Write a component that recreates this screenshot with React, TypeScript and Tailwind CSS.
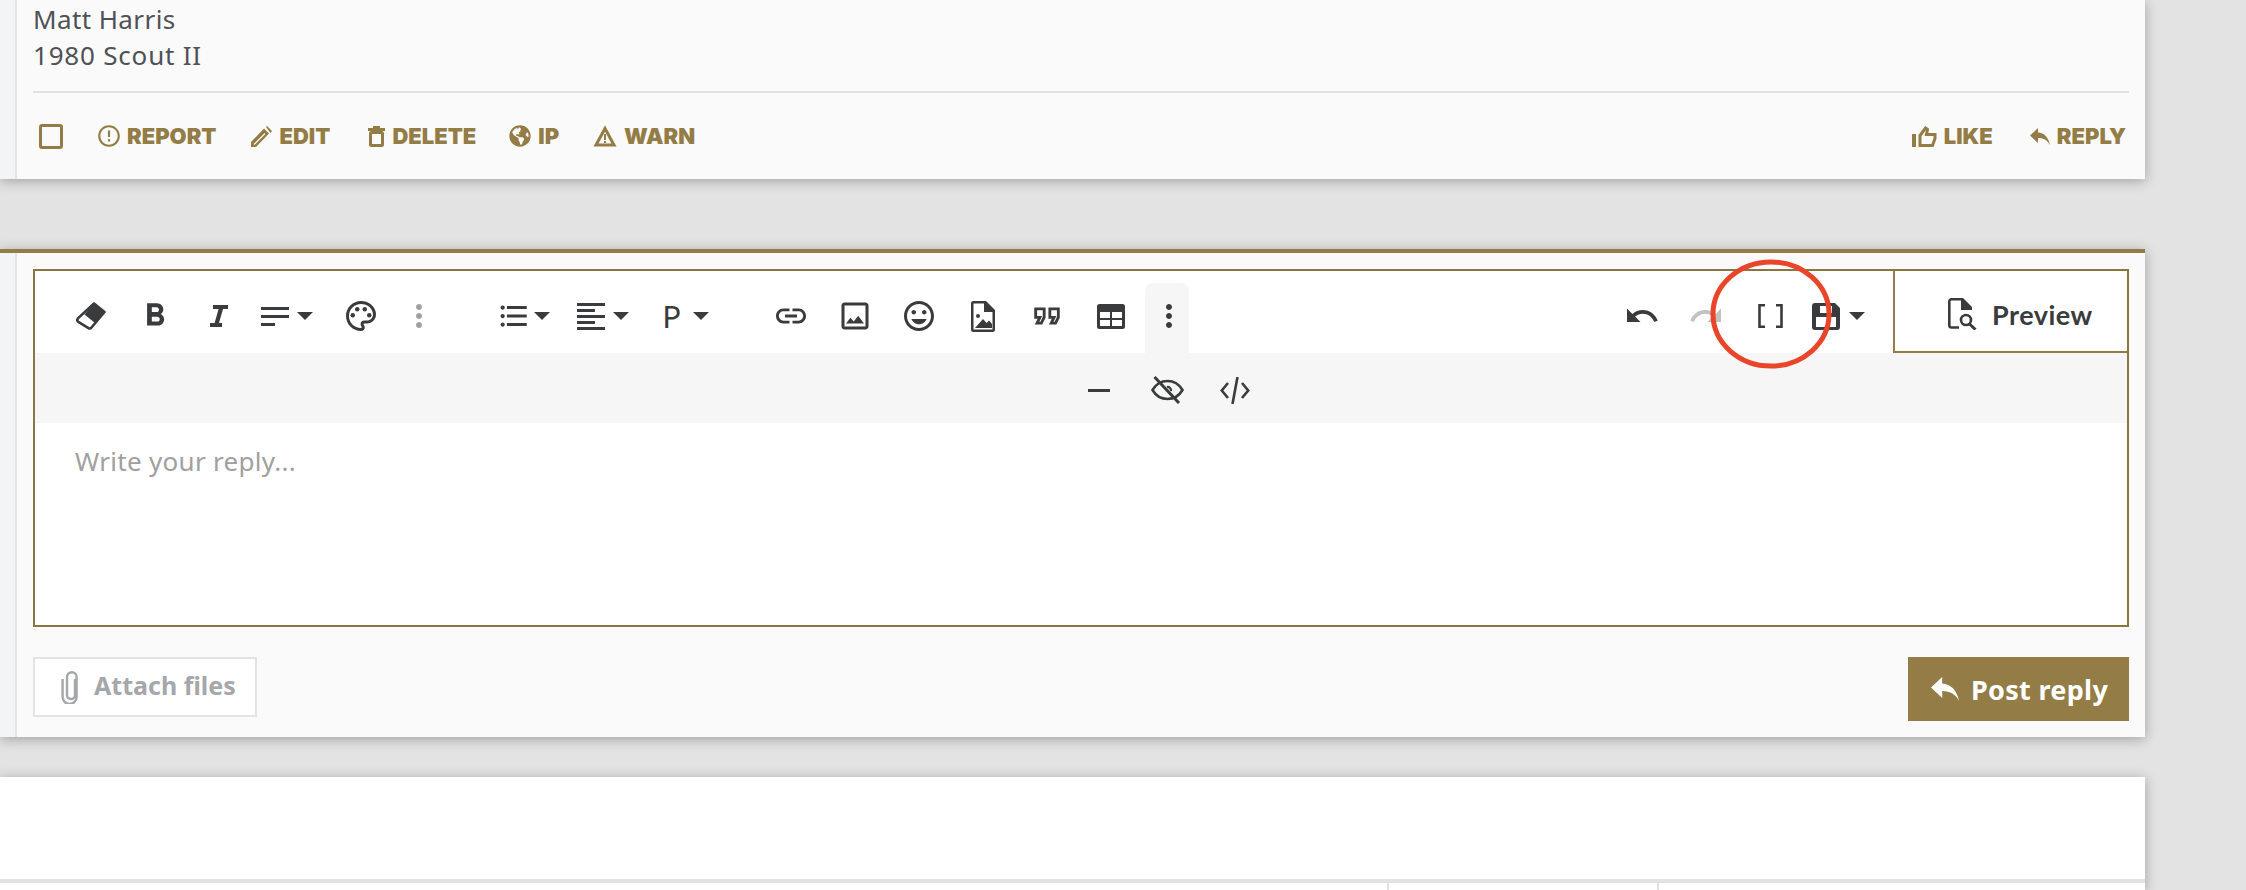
import React from "react";
import { MdErrorOutline, MdFormatBold, MdFormatListBulleted, MdLink, MdMoreVert, MdOutlineFormatQuote, MdOutlineImage, MdOutlineMood, MdOutlinePalette, MdRedo, MdUndo } from "react-icons/md";
import { FaGlobeAmericas } from "react-icons/fa";

const Caret = () => (
  <svg width="16" height="8" viewBox="0 0 16 8" className="block shrink-0"><polygon points="0,0 16,0 8,8" fill="#3a3b3d" /></svg>
);

const Eraser = () => (
  <svg width="30" height="28" viewBox="0 0 30 28" className="block">
    <path d="M18 1.5 28.5 10 15.5 25.5a2.5 2.5 0 0 1-3.4.4L2.3 19.8a2.5 2.5 0 0 1-.4-3.4Z" fill="#fff" stroke="#3a3b3d" strokeWidth="2.6" strokeLinejoin="round" />
    <path d="M18 1.5 28.5 10 19 21 8.5 12.5Z" fill="#3a3b3d" />
  </svg>
);

const Italic = () => (
  <svg width="18" height="22" viewBox="0 0 18 22" className="block">
    <path d="M3 0h15v4h-5l-4 14h3v4H0v-4h4.600l4-14H3Z" fill="#3a3b3d" />
  </svg>
);

const AlignA = () => (
  <svg width="28" height="19" viewBox="0 0 28 19" className="block" fill="#3a3b3d">
    <rect width="28" height="3" /><rect y="8" width="28" height="3" /><rect y="16" width="14" height="3" />
  </svg>
);

const AlignB = () => (
  <svg width="28" height="27" viewBox="0 0 28 27" className="block" fill="#3a3b3d">
    <rect width="28" height="3" /><rect y="6" width="18" height="3" /><rect y="12" width="28" height="3" /><rect y="18" width="18" height="3" /><rect y="24" width="28" height="3" />
  </svg>
);

const FileImage = () => (
  <svg width="24" height="31" viewBox="0 0 24 31" className="block" fill="#3a3b3d">
    <path fillRule="evenodd" d="M2.500 0H15l9 9v19.500a2.500 2.500 0 0 1-2.500 2.500h-19A2.500 2.500 0 0 1 0 28.500v-26A2.500 2.500 0 0 1 2.500 0Zm0 2.500v26h19V11h-8.500V2.500Z" />
    <circle cx="7" cy="15" r="2" />
    <path d="M4 27 12 18l3.500 4 2.500-2.500L21 23v4Z" />
  </svg>
);

const TableIcon = () => (
  <svg width="28" height="25" viewBox="0 0 28 25" className="block">
    <rect width="28" height="25" rx="2.500" fill="#3a3b3d" />
    <rect x="3" y="8" width="10" height="6" fill="#fff" /><rect x="15" y="8" width="10" height="6" fill="#fff" />
    <rect x="3" y="16" width="10" height="6" fill="#fff" /><rect x="15" y="16" width="10" height="6" fill="#fff" />
  </svg>
);

const Brackets = () => (
  <svg width="25" height="24" viewBox="0 0 25 24" className="block" fill="none" stroke="#3a3b3d" strokeWidth="2.600">
    <path d="M7 1.300H1.500v21.400H7M18 1.300h5.500v21.400H18" />
  </svg>
);

const Save = () => (
  <svg width="28" height="27" viewBox="0 0 28 27" className="block">
    <path fillRule="evenodd" fill="#3a3b3d" d="M3 0h20l5 5v19a3 3 0 0 1-3 3H3a3 3 0 0 1-3-3V3a3 3 0 0 1 3-3Zm5 3v7h12V3ZM4 14v10h20V14Z" />
  </svg>
);

const Minus = () => <div className="h-[3px] w-[22px] bg-[#3a3b3d]" />;

const EyeOff = () => (
  <svg width="33" height="28" viewBox="0 0 33 28" className="block" fill="none" stroke="#3a3b3d" strokeWidth="2.600">
    <path d="M1.500 14C5 8 10 5 16.500 5S28 8 31.500 14C28 20 23 23 16.500 23S5 20 1.500 14Z" />
    <path d="M16 11a3.500 3.500 0 0 1 4 4" strokeWidth="2.200" />
    <path d="M3.500 1 28 27" strokeWidth="3" />
  </svg>
);

const Code = () => (
  <svg width="30" height="27" viewBox="0 0 30 27" className="block" fill="none" stroke="#3a3b3d" strokeWidth="2.600">
    <path d="M8 6 1.800 13.500 8 21M22 6l6.200 7.500L22 21M17.500 0 12.500 27" />
  </svg>
);

const PreviewIcon = () => (
  <svg width="29" height="32" viewBox="0 0 29 32" className="block" fill="none" stroke="#3a3b3d" strokeWidth="2.600">
    <path d="M11 29.500H3.500a2.200 2.200 0 0 1-2.200-2.200V3.500a2.200 2.200 0 0 1 2.200-2.200H14" />
    <path d="M13 0h2l9 9v3H13Z" fill="#3a3b3d" stroke="none" />
    <circle cx="18" cy="22" r="5" />
    <path d="m21.500 26 6 5.500" strokeWidth="3" />
  </svg>
);

const Clip = () => (
  <svg width="18" height="34" viewBox="0 0 18 34" className="block" fill="none" stroke="#a5a7ab" strokeWidth="2.400">
    <path d="M12.500 8v16a4 4 0 0 1-8 0V6a4.800 4.800 0 0 1 9.600 0v20a7 7 0 0 1-14 0V8" transform="translate(1.500 1)" />
  </svg>
);

const Pencil = () => (
  <svg width="21" height="21" viewBox="0 0 21 21" className="block" fill="#937c45">
    <path d="M0 21v-5L13 2.500l5 5L5 21Zm15-20 1-1 5 5-1.500 2Z" />
    <path d="M3 18.500 14 7.500" stroke="#fafafa" strokeWidth="1.200" />
  </svg>
);

const Trash = () => (
  <svg width="17" height="21" viewBox="0 0 17 21" className="block">
    <path d="M5 0h7v2h5v3H0V2h5Z" fill="#937c45" />
    <rect x="2.500" y="6.500" width="12" height="13" rx="1" fill="none" stroke="#937c45" strokeWidth="3" />
  </svg>
);

const Warn = () => (
  <svg width="24" height="22" viewBox="0 0 24 22" className="block">
    <path d="M12 3.500 21 20H3Z" fill="none" stroke="#937c45" strokeWidth="3" strokeLinejoin="miter" />
    <path d="M11 9h2v6h-2ZM11 16h2v2h-2Z" fill="#937c45" />
  </svg>
);

const Thumb = () => (
  <svg width="25" height="21" viewBox="0 0 25 21" className="block">
    <rect y="8" width="4" height="13" fill="#937c45" />
    <path d="M8 19.500V9.500L13.500 2l2 1.500-1 5h8.500v4l-2.500 7Z" fill="none" stroke="#937c45" strokeWidth="3" strokeLinejoin="miter" />
  </svg>
);

const ReplyIcon = ({ w, h, color }: { w: number; h: number; color: string }) => (
  <svg width={w} height={h} viewBox="0 0 20 17" className="block">
    <path d="M0 7.500 8 0v4.500C14 5 18.500 9 20 17c-2.500-4.500-6-7-12-7v5Z" fill={color} />
  </svg>
);

const Action = ({ icon, label, cls = "" }: { icon: React.ReactNode; label: string; cls?: string }) => (
  <div className={`flex items-center gap-[7px] text-[#937c45] ${cls}`}>
    {icon}
    <span className="font-['Inter',sans-serif] text-[22px] leading-none font-black">{label}</span>
  </div>
);

const Btn = ({ w, children }: { w: string; children: React.ReactNode }) => (
  <div className={`flex h-full shrink-0 items-center justify-center ${w}`}>{children}</div>
);

const Strip = () => <div className="w-[17px] shrink-0 border-r-2 border-[#e3e3e3] bg-[#f2f4f6]" />;

export default function App() {
  const ic = "#3a3b3d";
  return (
    <div className="h-[890px] w-full overflow-hidden bg-[#e3e3e3] font-['Noto_Sans',sans-serif]">
      <div className="flex w-[2145px] flex-col">
        <section className="flex h-[179px] shadow-[0_2px_12px_rgba(0,0,0,0.3)]">
          <Strip />
          <div className="flex flex-1 flex-col bg-[#fafafa] pr-4 pl-4">
            <div className="pt-px text-[26px] leading-[36px] tracking-[0.4px] text-[#4f5156]">
              <div>Matt Harris</div>
              <div className="tracking-[0.8px]">1980 Scout II</div>
            </div>
            <div className="mt-[18px] h-[2px] bg-[#e3e3e3]" />
            <div className="flex flex-1 items-center justify-between pr-[3px] pl-[6px]">
              <div className="flex items-center gap-[35px]">
                <div className="h-[25px] w-[24px] rounded-[3px] border-[3px] border-[#937c45]" />
                <Action icon={<MdErrorOutline size={26} color="#937c45" className="-mx-[2px]" />} label="REPORT" />
                <Action icon={<Pencil />} label="EDIT" />
                <Action icon={<Trash />} label="DELETE" cls="ml-[3px]" />
                <Action icon={<FaGlobeAmericas size={22} color="#937c45" />} label="IP" cls="-ml-[2px]" />
                <Action icon={<Warn />} label="WARN" cls="-ml-px" />
              </div>
              <div className="flex items-center gap-[37px]">
                <Action icon={<Thumb />} label="LIKE" />
                <Action icon={<ReplyIcon w={20} h={17} color="#937c45" />} label="REPLY" />
              </div>
            </div>
          </div>
        </section>

        <section className="mt-[70px] flex h-[488px] border-t-4 border-[#937c45] shadow-[0_2px_12px_rgba(0,0,0,0.3)]">
          <Strip />
          <div className="flex flex-1 flex-col bg-[#fafafa] px-4 pt-4">
            <div className="h-[358px] border-2 border-[#8c7640] bg-white">
              <div className="flex h-[82px] items-stretch">
                <div className="flex flex-1 items-center pt-2 pl-6">
                  <Btn w="w-[64px]"><Eraser /></Btn>
                  <Btn w="w-[64px]"><MdFormatBold size={38} color={ic} /></Btn>
                  <Btn w="w-[64px]"><Italic /></Btn>
                  <Btn w="w-[72px]"><div className="flex items-center gap-2"><AlignA /><Caret /></div></Btn>
                  <Btn w="w-[76px]"><MdOutlinePalette size={36} color={ic} /></Btn>
                  <Btn w="w-[40px]"><MdMoreVert size={36} color="#a0a0a0" /></Btn>
                  <div className="ml-[47px] flex h-full">
                    <Btn w="w-[78px]"><div className="flex items-center gap-[6px]"><MdFormatListBulleted size={34} color={ic} className="-mx-[3px]" /><Caret /></div></Btn>
                    <Btn w="w-[78px]"><div className="flex items-center gap-2"><AlignB /><Caret /></div></Btn>
                    <Btn w="w-[87px]"><div className="flex items-center gap-[12px]"><span className="font-['Lato',sans-serif] text-[30px] leading-none font-normal text-[#3a3b3d]">P</span><Caret /></div></Btn>
                  </div>
                  <div className="ml-[30px] flex h-full">
                    <Btn w="w-[64px]"><MdLink size={36} color={ic} /></Btn>
                    <Btn w="w-[64px]"><MdOutlineImage size={36} color={ic} /></Btn>
                    <Btn w="w-[64px]"><MdOutlineMood size={36} color={ic} /></Btn>
                    <Btn w="w-[64px]"><FileImage /></Btn>
                    <Btn w="w-[64px]"><MdOutlineFormatQuote size={34} color={ic} /></Btn>
                    <Btn w="w-[64px]"><TableIcon /></Btn>
                  </div>
                  <div className="ml-[2px] flex h-[70px] w-[44px] items-center justify-center self-end rounded-t-[8px] bg-[#f6f6f6] pb-1 pl-[4px]">
                    <MdMoreVert size={36} color={ic} />
                  </div>
                  <div className="ml-auto flex h-full pr-[18px]">
                    <Btn w="w-[64px]"><MdUndo size={36} color={ic} /></Btn>
                    <Btn w="w-[64px]"><MdRedo size={36} color="#c2c2c2" /></Btn>
                    <div className="relative flex h-full w-[64px] shrink-0 items-center justify-center">
                      <Brackets />
                      <svg width="122" height="110" viewBox="0 0 122 110" fill="none" className="absolute top-[-20px] left-[-28px] overflow-visible">
                        <ellipse cx="61" cy="55" rx="58" ry="52" stroke="#e8452a" strokeWidth="5" />
                      </svg>
                    </div>
                    <Btn w="w-[73px]"><div className="flex items-center gap-[9px]"><Save /><Caret /></div></Btn>
                  </div>
                </div>
                <div className="flex w-[234px] items-center gap-[15px] border-b-2 border-l-2 border-[#937c45] pt-[6px] pl-[53px]">
                  <PreviewIcon />
                  <span className="font-['Lato',sans-serif] text-[27px] leading-none font-bold tracking-[0.5px] text-[#3a3b3d]">Preview</span>
                </div>
              </div>
              <div className="flex h-[70px] items-center bg-[#f6f6f6] pt-1 pl-[1030px]">
                <Btn w="w-[68px]"><Minus /></Btn>
                <Btn w="w-[68px]"><EyeOff /></Btn>
                <Btn w="w-[68px]"><Code /></Btn>
              </div>
              <div className="pt-[20px] pl-[40px] text-[26px] leading-[36px] tracking-[0.3px] text-[#a0a0a0]">Write your reply...</div>
            </div>
            <div className="mt-[30px] flex items-start justify-between">
              <div className="flex h-[60px] w-[224px] items-center gap-[15px] border-2 border-[#e3e3e3] bg-white pl-[26px]">
                <Clip />
                <span className="pb-[3px] text-[25px] leading-none font-bold text-[#a5a7ab]">Attach files</span>
              </div>
              <div className="flex h-[64px] w-[221px] items-center gap-3 bg-[#937c45] pl-[23px]">
                <ReplyIcon w={28} h={24} color="#fff" />
                <span className="text-[27px] leading-none font-bold tracking-[0.3px] text-white">Post reply</span>
              </div>
            </div>
          </div>
        </section>

        <section className="mt-[40px] flex h-[113px] flex-col bg-white shadow-[0_2px_12px_rgba(0,0,0,0.3)]">
          <div className="h-[106px] border-b-4 border-[#e3e3e3]" />
          <div className="flex flex-1">
            <div className="w-[1389px] border-r-2 border-[#e3e3e3]" />
            <div className="w-[270px] border-r-2 border-[#e3e3e3]" />
          </div>
        </section>
      </div>
    </div>
  );
}
